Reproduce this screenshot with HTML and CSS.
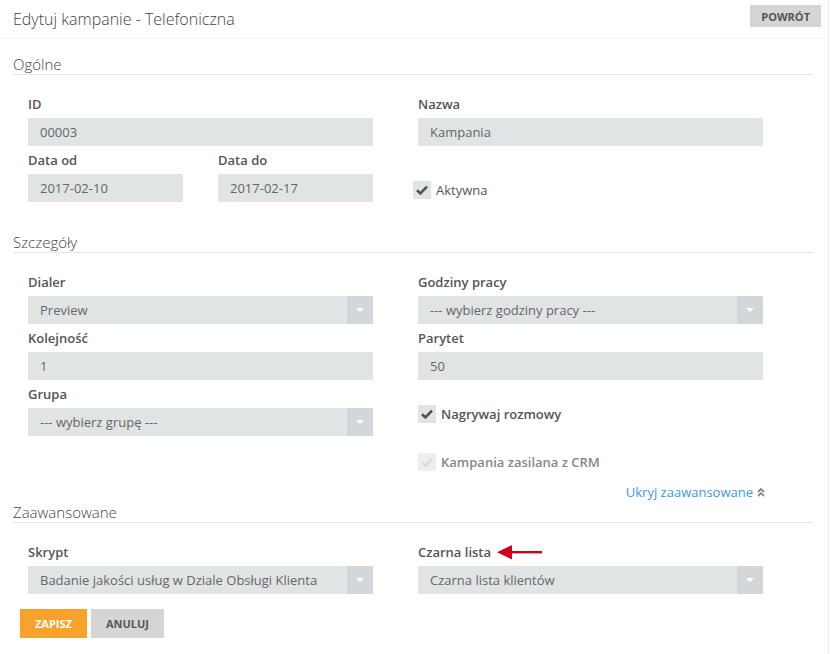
FILE: index.html
```html
<!DOCTYPE html>
<html lang="pl">
<head>
  <meta charset="UTF-8">
  <meta name="viewport" content="width=device-width, initial-scale=1.0">
  <title>Edytuj kampanie - Telefoniczna</title>
  <link rel="stylesheet" href="styles.css">
</head>
<body>
  <div class="page">
    <div class="header">
      <h1 class="title">Edytuj kampanie - Telefoniczna</h1>
      <button class="btn btn-grey">Powrót</button>
    </div>

    <!-- Ogólne -->
    <div class="section">
      <h2 class="section-title">Ogólne</h2>
      <div class="section-body">
        <div class="col">
          <div class="field">
            <label>ID</label>
            <div class="input">00003</div>
          </div>
          <div class="row">
            <div class="field narrow">
              <label>Data od</label>
              <div class="input">2017-02-10</div>
            </div>
            <div class="field narrow">
              <label>Data do</label>
              <div class="input">2017-02-17</div>
            </div>
          </div>
        </div>
        <div class="col">
          <div class="field">
            <label>Nazwa</label>
            <div class="input">Kampania</div>
          </div>
          <div class="check check-active">
            <span class="box">
              <svg width="12" height="10" viewBox="0 0 12 10"><path d="M1 5.2 4.4 8.4 11 1.6" fill="none" stroke="currentColor" stroke-width="2.6"/></svg>
            </span>
            <span class="check-text">Aktywna</span>
          </div>
        </div>
      </div>
    </div>

    <!-- Szczegóły -->
    <div class="section">
      <h2 class="section-title">Szczegóły</h2>
      <div class="section-body tight">
        <div class="col">
          <div class="field">
            <label>Dialer</label>
            <div class="input select">Preview<span class="caret"></span></div>
          </div>
          <div class="field">
            <label>Kolejność</label>
            <div class="input">1</div>
          </div>
          <div class="field">
            <label>Grupa</label>
            <div class="input select">--- wybierz grupę ---<span class="caret"></span></div>
          </div>
        </div>
        <div class="col">
          <div class="field">
            <label>Godziny pracy</label>
            <div class="input select">--- wybierz godziny pracy ---<span class="caret"></span></div>
          </div>
          <div class="field">
            <label>Parytet</label>
            <div class="input">50</div>
          </div>
          <div class="check check-first">
            <span class="box">
              <svg width="12" height="10" viewBox="0 0 12 10"><path d="M1 5.2 4.4 8.4 11 1.6" fill="none" stroke="currentColor" stroke-width="2.6"/></svg>
            </span>
            <span class="check-text bold">Nagrywaj rozmowy</span>
          </div>
          <div class="check disabled">
            <span class="box">
              <svg width="12" height="10" viewBox="0 0 12 10"><path d="M1 5.2 4.4 8.4 11 1.6" fill="none" stroke="currentColor" stroke-width="2.6"/></svg>
            </span>
            <span class="check-text bold">Kampania zasilana z CRM</span>
          </div>
          <div class="toggle">
            <a href="#">Ukryj zaawansowane</a>
            <svg width="8" height="10" viewBox="0 0 8 10"><path d="M1 5 4 2 7 5M1 9 4 6 7 9" fill="none" stroke="currentColor" stroke-width="1.8"/></svg>
          </div>
        </div>
      </div>
    </div>

    <!-- Zaawansowane -->
    <div class="section">
      <h2 class="section-title">Zaawansowane</h2>
      <div class="section-body last">
        <div class="col">
          <div class="field">
            <label>Skrypt</label>
            <div class="input select">Badanie jakości usług w Dziale Obsługi Klienta<span class="caret"></span></div>
          </div>
        </div>
        <div class="col">
          <div class="field">
            <label>Czarna lista
              <svg class="pointer" width="46" height="16" viewBox="0 0 46 16"><path d="M15 7h30v2.4H15z" fill="#d0021b"/><path d="M0 8.2 15 1v14.4z" fill="#d0021b"/></svg>
            </label>
            <div class="input select">Czarna lista klientów<span class="caret"></span></div>
          </div>
        </div>
      </div>
    </div>

    <div class="actions">
      <button class="btn btn-orange">Zapisz</button>
      <button class="btn btn-grey">Anuluj</button>
    </div>
  </div>
</body>
</html>
```

FILE: styles.css
```css
* {
  margin: 0;
  padding: 0;
  box-sizing: border-box;
}

body {
  font-family: 'Open Sans', 'Liberation Sans', sans-serif;
  color: #555;
  background: #fff;
}

.page {
  width: 829px;
  min-height: 654px;
  border-right: 1px solid #ececec;
}

/* top bar */
.header {
  height: 39px;
  display: flex;
  justify-content: space-between;
  align-items: center;
  padding: 0 7px 1px 13px;
  border-bottom: 1px solid #f3f3f3;
}

.title {
  font-size: 16px;
  font-weight: 300;
  color: #444;
  line-height: 22px;
}

.btn {
  font-family: inherit;
  font-size: 11px;
  font-weight: 700;
  text-transform: uppercase;
  border: 0;
  cursor: pointer;
  height: 29px;
  padding: 0 15px;
}

.header .btn {
  height: 22px;
  padding: 0 11px;
  margin-top: -5px;
}

.btn-grey {
  background: #d5d5d5;
  color: #555;
}

.btn-orange {
  background: #f6a22b;
  color: #fff;
}

/* sections */
.section {
  margin: 15px 15px 0 13px;
}

.section + .section {
  margin-top: 0;
}

.section-title {
  font-size: 15px;
  font-weight: 300;
  line-height: 20px;
  color: #444;
  border-bottom: 1px solid #e6e6e6;
}

.section-body {
  display: grid;
  grid-template-columns: 345px 345px;
  column-gap: 45px;
  padding: 20px 0 30px 15px;
}

.section-body.tight {
  padding-bottom: 1px;
}

.section-body.last {
  padding-bottom: 0;
}

.col {
  display: flex;
  flex-direction: column;
}

.row {
  display: flex;
  gap: 35px;
}

.col > .field + .field,
.col > .field + .row {
  margin-top: 5px;
}

.field.narrow {
  width: 155px;
}

.field label {
  display: flex;
  align-items: center;
  font-size: 13px;
  font-weight: 600;
  line-height: 18px;
  color: #555;
  margin-bottom: 5px;
}

.pointer {
  margin-left: 6px;
}

.input {
  position: relative;
  height: 28px;
  line-height: 28px;
  background: #e1e4e5;
  font-size: 13px;
  color: #666;
  padding-left: 12px;
  white-space: nowrap;
}

.select .caret {
  position: absolute;
  right: 0;
  top: 0;
  width: 26px;
  height: 28px;
  background: #d4d7d9;
}

.select .caret:after {
  content: '';
  position: absolute;
  left: 9px;
  top: 12px;
  border-left: 4px solid transparent;
  border-right: 4px solid transparent;
  border-top: 4px solid #fff;
}

/* checkboxes */
.check {
  display: flex;
  align-items: center;
  height: 18px;
  margin-top: 30px;
}

.check-active {
  margin-top: 35px;
  margin-left: -5px;
}

.check-first {
  margin-top: 25px;
}

.box {
  width: 18px;
  height: 18px;
  background: #e1e4e5;
  color: #4a5157;
  display: flex;
  justify-content: center;
  align-items: center;
  margin-right: 5px;
}

.check-text {
  font-size: 13px;
  color: #555;
}

.check-text.bold {
  font-weight: 600;
}

.check.disabled .box {
  background: #eceeef;
  color: #d9dcde;
}

.check.disabled .check-text {
  color: #888;
}

.toggle {
  display: flex;
  justify-content: flex-end;
  align-items: center;
  gap: 4px;
  margin: 12px -2px 0 0;
  line-height: 18px;
  color: #888;
}

.toggle a {
  font-size: 13px;
  color: #3d9ad6;
  text-decoration: none;
}

/* bottom buttons */
.actions {
  display: flex;
  gap: 4px;
  padding: 15px 0 0 20px;
}
```
